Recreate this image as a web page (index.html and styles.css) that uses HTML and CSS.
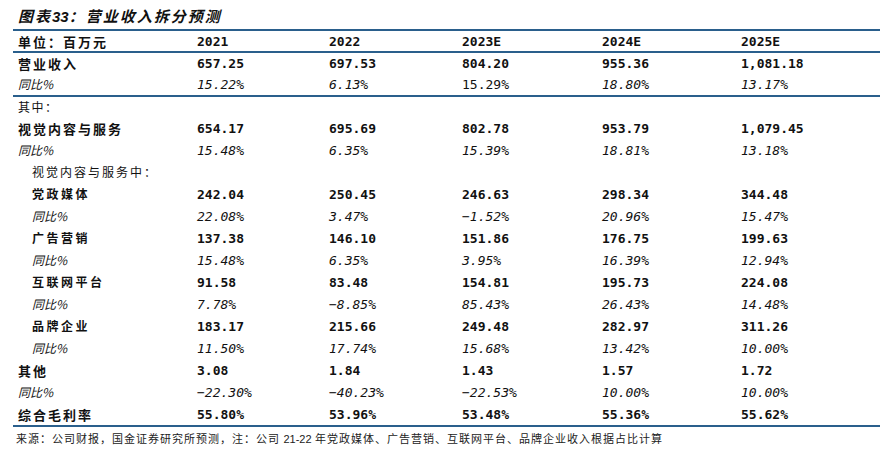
FILE: index.html
```html
<!DOCTYPE html>
<html lang="zh-CN">
<head>
<meta charset="utf-8">
<title>图表33：营业收入拆分预测</title>
<link rel="stylesheet" href="styles.css">
</head>
<body>
<div class="figure">
  <div class="title">图表<span class="tnum">33</span>：营业收入拆分预测</div>
  <div class="table">
    <div class="row head">
      <div class="lbl b">单位：百万元</div>
      <div class="num b">2021</div><div class="num b">2022</div><div class="num b">2023E</div><div class="num b">2024E</div><div class="num b">2025E</div>
    </div>
    <div class="row r20">
      <div class="lbl b">营业收入</div>
      <div class="num b">657.25</div><div class="num b">697.53</div><div class="num b">804.20</div><div class="num b">955.36</div><div class="num b">1,081.18</div>
    </div>
    <div class="row sep">
      <div class="lbl i">同比%</div>
      <div class="num i">15.22%</div><div class="num i">6.13%</div><div class="num">15.29%</div><div class="num i">18.80%</div><div class="num i">13.17%</div>
    </div>
    <div class="row r20">
      <div class="lbl r">其中：</div>
    </div>
    <div class="row">
      <div class="lbl b">视觉内容与服务</div>
      <div class="num b">654.17</div><div class="num b">695.69</div><div class="num b">802.78</div><div class="num b">953.79</div><div class="num b">1,079.45</div>
    </div>
    <div class="row">
      <div class="lbl i">同比%</div>
      <div class="num i">15.48%</div><div class="num i">6.35%</div><div class="num i">15.39%</div><div class="num i">18.81%</div><div class="num i">13.18%</div>
    </div>
    <div class="row">
      <div class="lbl r sub">视觉内容与服务中：</div>
    </div>
    <div class="row">
      <div class="lbl b sub">党政媒体</div>
      <div class="num b">242.04</div><div class="num b">250.45</div><div class="num b">246.63</div><div class="num b">298.34</div><div class="num b">344.48</div>
    </div>
    <div class="row">
      <div class="lbl i sub">同比%</div>
      <div class="num i">22.08%</div><div class="num i">3.47%</div><div class="num i">−1.52%</div><div class="num i">20.96%</div><div class="num i">15.47%</div>
    </div>
    <div class="row">
      <div class="lbl b sub">广告营销</div>
      <div class="num b">137.38</div><div class="num b">146.10</div><div class="num b">151.86</div><div class="num b">176.75</div><div class="num b">199.63</div>
    </div>
    <div class="row">
      <div class="lbl i sub">同比%</div>
      <div class="num i">15.48%</div><div class="num i">6.35%</div><div class="num i">3.95%</div><div class="num i">16.39%</div><div class="num i">12.94%</div>
    </div>
    <div class="row">
      <div class="lbl b sub">互联网平台</div>
      <div class="num b">91.58</div><div class="num b">83.48</div><div class="num b">154.81</div><div class="num b">195.73</div><div class="num b">224.08</div>
    </div>
    <div class="row">
      <div class="lbl i sub">同比%</div>
      <div class="num i">7.78%</div><div class="num i">−8.85%</div><div class="num i">85.43%</div><div class="num i">26.43%</div><div class="num i">14.48%</div>
    </div>
    <div class="row">
      <div class="lbl b sub">品牌企业</div>
      <div class="num b">183.17</div><div class="num b">215.66</div><div class="num b">249.48</div><div class="num b">282.97</div><div class="num b">311.26</div>
    </div>
    <div class="row">
      <div class="lbl i sub">同比%</div>
      <div class="num i">11.50%</div><div class="num i">17.74%</div><div class="num i">15.68%</div><div class="num i">13.42%</div><div class="num i">10.00%</div>
    </div>
    <div class="row">
      <div class="lbl b">其他</div>
      <div class="num b">3.08</div><div class="num b">1.84</div><div class="num b">1.43</div><div class="num b">1.57</div><div class="num b">1.72</div>
    </div>
    <div class="row">
      <div class="lbl i">同比%</div>
      <div class="num i">−22.30%</div><div class="num i">−40.23%</div><div class="num i">−22.53%</div><div class="num i">10.00%</div><div class="num i">10.00%</div>
    </div>
    <div class="row">
      <div class="lbl b">综合毛利率</div>
      <div class="num b">55.80%</div><div class="num b">53.96%</div><div class="num b">53.48%</div><div class="num b">55.36%</div><div class="num b">55.62%</div>
    </div>
  </div>
  <div class="note">来源：公司财报，国金证券研究所预测，注：公司 <span class="nnum">21-22</span> 年党政媒体、广告营销、互联网平台、品牌企业收入根据占比计算</div>
</div>
</body>
</html>
```

FILE: styles.css
```css
html, body {
  margin: 0;
  padding: 0;
  background: #ffffff;
}

body {
  font-family: "Noto Sans CJK SC", "Noto Sans", sans-serif;
  color: #111111;
}

.figure {
  width: 867px;
  padding-left: 13px;
}

.title {
  height: 29px;
  box-sizing: border-box;
  padding: 2px 0 0 5px;
  line-height: 27px;
  font-size: 15px;
  font-weight: 700;
  font-style: italic;
  letter-spacing: 2px;
}

.title .tnum {
  font-family: "Liberation Sans", sans-serif;
  letter-spacing: 0;
}

.table {
  border-top: 2px solid #2a5f8c;
  border-bottom: 2px solid #2a5f8c;
}

.row {
  display: grid;
  grid-template-columns: 179px 132px 133px 140px 139px 1fr;
  height: 22px;
  align-items: center;
}

.row > div {
  padding-left: 5px;
  white-space: nowrap;
}

.row.head {
  height: 20px;
  border-bottom: 2px solid #2a5f8c;
}

.row.r20 {
  height: 20px;
}

.row.sep {
  border-bottom: 2px solid #2a5f8c;
}

.lbl {
  font-size: 13px;
  letter-spacing: 2px;
  line-height: 1;
}

.lbl.sub {
  padding-left: 19px;
  font-size: 12px;
  letter-spacing: 2.5px;
}

.lbl.b {
  font-weight: 700;
}

.lbl.r {
  font-weight: 400;
  font-size: 12px;
  letter-spacing: 1.5px;
}

.lbl.r.sub {
  letter-spacing: 2px;
}

.lbl.i {
  font-style: italic;
  font-size: 12px;
  letter-spacing: 0;
}

.num {
  font-family: "DejaVu Sans Mono", "Liberation Mono", monospace;
  font-size: 13px;
  line-height: 1;
}

.num.b {
  font-weight: 700;
}

.num.i {
  font-style: italic;
}

.note {
  height: 22px;
  line-height: 22px;
  padding-left: 3px;
  font-size: 11px;
  letter-spacing: 1px;
  color: #222222;
}

.note .nnum {
  font-family: "Liberation Sans", sans-serif;
  font-size: 11px;
  letter-spacing: 0;
}
```
